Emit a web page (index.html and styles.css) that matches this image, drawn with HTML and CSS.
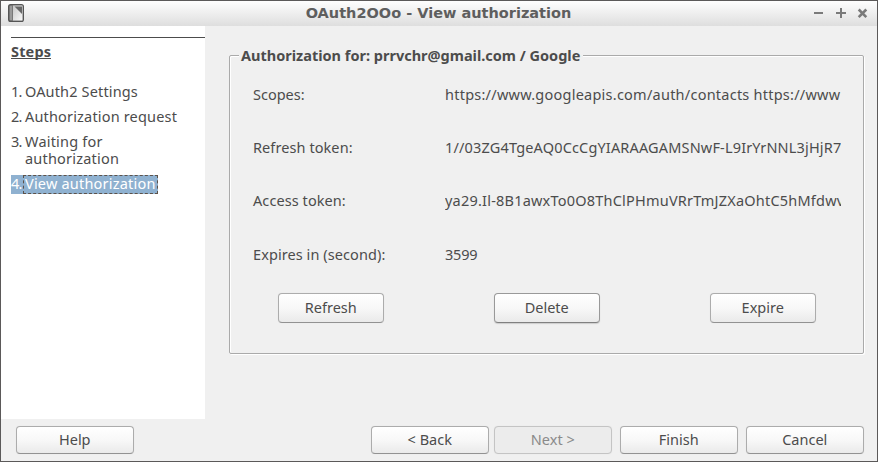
FILE: index.html
```html
<!DOCTYPE html>
<html lang="en">
<head>
<meta charset="utf-8">
<title>OAuth2OOo - View authorization</title>
<link rel="stylesheet" href="styles.css">
</head>
<body>
<div class="window">
  <header class="titlebar">
    <svg class="app-icon" width="16" height="18" viewBox="0 0 16 18">
      <defs><linearGradient id="page" x1="0" y1="0" x2="1" y2="1"><stop offset="0" stop-color="#c8c8c8"/><stop offset="1" stop-color="#f8f8f8"/></linearGradient></defs>
      <rect x=".75" y=".75" width="14.5" height="16.5" rx="1.8" fill="#999" stroke="#555" stroke-width="1.5"/>
      <path d="M5 1.5h9.5v15H5z" fill="url(#page)"/>
      <path d="M4.5 1.5v15" stroke="#777"/>
      <path d="M6.5 2.5H14v7.5z" fill="#666"/>
    </svg>
    <h1 class="title">OAuth2OOo - View authorization</h1>
    <svg class="controls" width="56" height="12" viewBox="0 0 56 12">
      <path d="M0 5h9M22 5h10M27 0v10" stroke="#7a7a7a" stroke-width="2" fill="none"/>
      <path d="M44.7 1.5l7.6 7.6M52.3 1.5l-7.6 7.6" stroke="#7a7a7a" stroke-width="2.6"/>
    </svg>
  </header>
  <div class="content">
    <nav class="sidebar">
      <div class="roadmap">
        <h2 class="steps-title">Steps</h2>
        <ol class="steps">
          <li class="step"><span class="num">1.</span><span class="name s1">OAuth2 Settings</span></li>
          <li class="step"><span class="num">2.</span><span class="name s2">Authorization request</span></li>
          <li class="step"><span class="num">3.</span><span class="name s3">Waiting for<br>authorization</span></li>
          <li class="step current"><span class="num">4.</span><span class="name s4">View authorization</span></li>
        </ol>
      </div>
    </nav>
    <main class="main">
      <section class="group">
        <div class="group-head"><h3 class="group-title">Authorization for: prrvchr@gmail.com / Google</h3></div>
        <dl class="fields">
          <dt class="l1">Scopes:</dt><dd class="v1">https://www.googleapis.com/auth/contacts https://www</dd>
          <dt class="l2">Refresh token:</dt><dd class="v2">1//03ZG4TgeAQ0CcCgYIARAAGAMSNwF-L9IrYrNNL3jHjR7C</dd>
          <dt class="l3">Access token:</dt><dd class="v3">ya29.Il-8B1awxTo0O8ThClPHmuVRrTmJZXaOhtC5hMfdwv</dd>
          <dt class="l4">Expires in (second):</dt><dd class="v4">3599</dd>
        </dl>
        <div class="actions">
          <button class="button">Refresh</button>
          <button class="button focus">Delete</button>
          <button class="button">Expire</button>
        </div>
      </section>
    </main>
  </div>
  <footer class="footer">
    <button class="button help">Help</button>
    <button class="button">&lt; Back</button>
    <button class="button next" disabled>Next &gt;</button>
    <button class="button">Finish</button>
    <button class="button">Cancel</button>
  </footer>
</div>
</body>
</html>
```

FILE: styles.css
```css
* { box-sizing: border-box; }
body { margin: 0; font: 14.5px/17px "Noto Sans", sans-serif; color: #4c4c4c; }
h1, h2, h3, ol, dl, dd { margin: 0; padding: 0; }
.window { width: 878px; height: 462px; border: 1px solid #5b5959; background: #f0f0f0; display: flex; flex-direction: column; overflow: hidden; }
.titlebar { height: 25px; flex: none; display: grid; grid-template-columns: 56px 1fr 56px; align-items: center; padding: 0 8px 0 7px; background: linear-gradient(#fefefe, #dedede); }
.app-icon { position: relative; top: -1px; }
.title { font: bold 14.5px/24px "DejaVu Sans", sans-serif; text-align: center; color: #5e5e5e; white-space: nowrap; padding-bottom: 1px; }
.controls { margin-left: 1px; }
.content { flex: none; height: 393px; display: flex; }
.sidebar { width: 204px; background: #fff; padding: 11px 0 0 10px; }
.roadmap { border-top: 1px solid #4c4c4c; padding-top: 5px; }
.steps-title { display: inline-block; font-size: 14.5px; line-height: 16px; border-bottom: 1px solid #4c4c4c; height: 16px; letter-spacing: .15px; }
.steps { list-style: none; padding-top: 23px; display: flex; flex-direction: column; gap: 8px; align-items: flex-start; }
.step { display: flex; white-space: nowrap; }
.num { width: 14px; letter-spacing: -.7px; }
.s1 { letter-spacing: .15px; }
.s2 { letter-spacing: .17px; }
.s3, .s4 { letter-spacing: .2px; }
.current { background: #8fb1d0; color: #fff; height: 19px; line-height: 17px; }
.current .num { width: 12px; }
.current .name { border: 1px dashed #5c5149; line-height: 15px; padding: 0 1px; width: 135px; }
.main { flex: 1; padding: 29px 13px 0 24px; }
.group { height: 299px; border: 1px solid #aaa; border-radius: 2px; box-shadow: 1px 1px #fff, inset 1px 1px #fff; padding: 0 22px 0 23px; }
.group-head { height: 31px; margin: -10px 0 0 -14px; }
.group-title { display: inline-block; font-size: 14.5px; line-height: 18px; background: #f0f0f0; padding: 0 3px 0 2px; white-space: nowrap; }
.fields { display: grid; grid-template-columns: 192px 396px; grid-template-rows: 53px 53px 54px 17px; padding-top: 9px; white-space: nowrap; }
.fields dd { overflow: hidden; height: 20px; }
.l2, .l3, .l4 { letter-spacing: .08px; }
.v1 { letter-spacing: .24px; }
.v2 { letter-spacing: .16px; }
.v3 { letter-spacing: .21px; }
.v4 { letter-spacing: -.2px; }
.actions { display: flex; justify-content: space-between; padding: 29px 25px 0; }
.button { appearance: none; width: 106px; height: 30px; padding: 0 .5px 1px 0; border: 1px solid #acacac; border-bottom-color: #929292; border-radius: 4px; background: linear-gradient(#fff, #f8f8f8 50%, #eaeaea); color: #4c4c4c; font: 14.5px/17px "Noto Sans", sans-serif; box-shadow: 0 0 1px #ddd; }
.actions .button { margin-top: 1px; }
.focus { border-color: #999; border-bottom-color: #808080; box-shadow: 0 1px 1px #ccc; }
.footer { display: flex; gap: 8px; padding: 7px 13px 0 15px; }
.footer .button { width: 118px; height: 28px; }
.footer .help { margin-right: auto; }
.footer .next { margin-left: -3px; background: #ececec; border-color: #c4c4c4; color: #8a8a8a; }
```
